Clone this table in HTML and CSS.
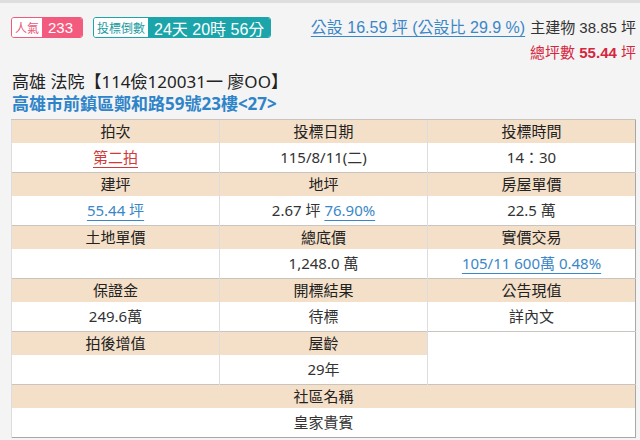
FILE: index.html
```html
<!DOCTYPE html>
<html lang="zh-Hant">
<head>
<meta charset="utf-8">
<link rel="stylesheet" href="styles.css">
</head>
<body>
<div class="page">
  <div class="top">
    <div class="badges">
      <span class="badge pop"><span class="lbl">人氣</span><span class="val">233</span></span>
      <span class="badge cd"><span class="lbl">投標倒數</span><span class="val">24天 20時 56分</span></span>
    </div>
    <div class="areas">
      <div class="line1"><a class="pub">公設 16.59 坪 (公設比 29.9 %)</a><span class="main">主建物 38.85 坪</span></div>
      <div class="total">總坪數 <b>55.44</b> 坪</div>
    </div>
  </div>
  <h1 class="title">高雄 法院【114儉120031一 廖OO】</h1>
  <div class="addr">高雄市前鎮區鄭和路59號23樓&lt;27&gt;</div>
  <table class="info">
    <tr class="hd"><th>拍次</th><th>投標日期</th><th>投標時間</th></tr>
    <tr class="dt"><td><a class="red">第二拍</a></td><td>115/8/11(二)</td><td>14：30</td></tr>
    <tr class="hd"><th>建坪</th><th>地坪</th><th>房屋單價</th></tr>
    <tr class="dt"><td><a class="blue">55.44 坪</a></td><td>2.67 坪 <a class="blue">76.90%</a></td><td>22.5 萬</td></tr>
    <tr class="hd"><th>土地單價</th><th>總底價</th><th>實價交易</th></tr>
    <tr class="dt"><td></td><td>1,248.0 萬</td><td><a class="blue">105/11 600萬 0.48%</a></td></tr>
    <tr class="hd"><th>保證金</th><th>開標結果</th><th>公告現值</th></tr>
    <tr class="dt"><td>249.6萬</td><td>待標</td><td>詳內文</td></tr>
    <tr class="hd"><th>拍後增值</th><th>屋齡</th><td class="blank" rowspan="2"></td></tr>
    <tr class="dt"><td></td><td>29年</td></tr>
    <tr class="hd"><th colspan="3">社區名稱</th></tr>
    <tr class="dt"><td colspan="3">皇家貴賓</td></tr>
  </table>
</div>
</body>
</html>
```

FILE: styles.css
```css
html, body {
  margin: 0;
  padding: 0;
}
body {
  background: #f4f4f4;
  width: 640px;
  height: 440px;
  overflow: hidden;
}
.page {
  border-top: 3px solid #dedede;
  padding: 13px 4px 0 11px;
  font-family: "Noto Sans", "Noto Sans CJK TC", sans-serif;
  color: #222;
}
.top {
  display: flex;
  justify-content: space-between;
  align-items: flex-start;
}
.badges {
  display: flex;
  gap: 10px;
  padding-top: 1px;
}
.badge {
  display: flex;
  height: 21px;
  border-radius: 3px;
  overflow: hidden;
  font-family: "Liberation Sans", "Noto Sans CJK TC", sans-serif;
  box-sizing: border-box;
  white-space: nowrap;
}
.badge .lbl {
  display: flex;
  align-items: center;
  justify-content: center;
  background: #fff;
  font-size: 12px;
  padding: 0 3px;
}
.badge .val {
  display: flex;
  align-items: center;
  color: #fff;
}
.pop {
  border: 1px solid #f05a7c;
  width: 72px;
}
.pop .lbl { color: #e8587a; }
.pop .val { background: #f35b7e; font-size: 15px; flex: 1; padding: 0 0 0 6px; }
.cd {
  border: 1px solid #1ba5aa;
  width: 178px;
}
.cd .lbl { color: #1a9ca0; }
.cd .val { background: #1ba5aa; font-size: 16px; flex: 1; padding: 0 0 0 6px; }

.areas {
  font-family: "Liberation Sans", "Noto Sans CJK TC", sans-serif;
  font-size: 15px;
  text-align: right;
}
.line1 {
  display: flex;
  align-items: baseline;
  gap: 5px;
  line-height: 20px;
  padding-top: 2px;
}
.pub {
  color: #3a87c8;
  font-size: 16px;
  text-decoration: underline;
  text-decoration-color: #3a87c8;
  text-underline-offset: 3px;
}
.main { color: #333; }
.total {
  color: #d6263f;
  font-size: 15px;
  line-height: 20px;
  margin-top: 5px;
}
.total b { font-weight: bold; }

.title {
  font-family: "Noto Sans", "Noto Sans CJK TC", sans-serif;
  font-size: 17px;
  font-weight: normal;
  margin: 7px 0 0 1px;
  line-height: 23px;
  color: #222;
}
.addr {
  font-size: 17px;
  font-weight: bold;
  color: #2f84c9;
  line-height: 22px;
  margin: 0 0 0 1px;
}
.info {
  margin-top: 4px;
  width: 625px;
  border-collapse: collapse;
  table-layout: fixed;
  border: 1px solid #a8a8a8;
  font-size: 15px;
  color: #333;
  font-family: "Noto Sans", "Noto Sans CJK TC", sans-serif;
}
.info th, .info td {
  text-align: center;
  padding: 0;
  border-left: 1px solid #ddd;
}
.info tr.hd {
  background: #f4dfc8;
  height: 23px;
}
.info tr.hd th {
  font-weight: normal;
  color: #222;
  border-top: 1px solid #c9c4bd;
  line-height: 22px;
}
.info tr.dt {
  background: #fff;
  height: 30px;
}
.info tr.dt td { line-height: 29px; }
.info td.blank {
  background: #fff;
  border-top: 1px solid #c9c4bd;
}
.red {
  color: #d23a3a;
  text-decoration: underline;
  text-underline-offset: 4px;
}
.blue {
  color: #3a87c8;
  text-decoration: underline;
  text-underline-offset: 4px;
}
```
